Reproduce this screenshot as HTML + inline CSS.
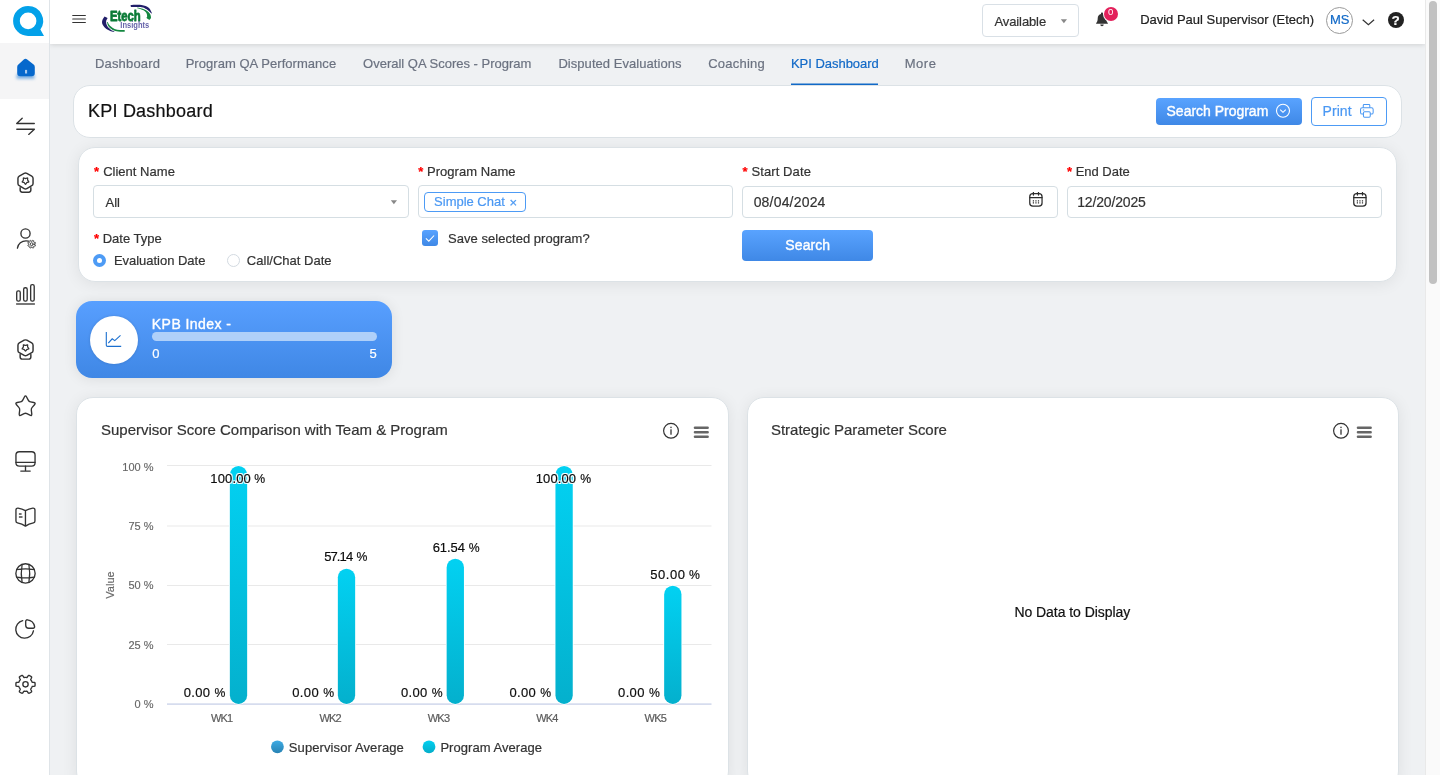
<!DOCTYPE html>
<html lang="en">
<head>
<meta charset="utf-8">
<title>KPI Dashboard</title>
<style>
*{box-sizing:border-box;margin:0;padding:0}
html,body{width:1440px;height:775px;overflow:hidden}
body{position:relative;background:#eff1f3;font-family:"Liberation Sans",Arial,Helvetica,sans-serif;color:#333;font-size:13px}
#app{position:absolute;left:0;top:0;width:1440px;height:775px;overflow:hidden;will-change:transform}
.a,.t,svg.i{position:absolute}
.t{white-space:nowrap;line-height:1;display:block}
ul{list-style:none}
a{text-decoration:none;color:inherit}
#sidebar{left:0;top:0;width:50px;height:775px;background:#fff;border-right:1px solid #dfe4e8}
#sb-active{left:0;top:43px;width:49px;height:56px;background:#f5f5f6}
#header{left:50px;top:0;width:1375px;height:44px;background:#fff;box-shadow:0 1px 5px rgba(0,0,0,.13)}
#scroll{left:1425px;top:0;width:15px;height:775px;background:#fafafa;border-left:1px solid #e9e9e9}
#thumb{left:1429px;top:1px;width:8px;height:283px;border-radius:4px;background:#c1c1c1}
.card{position:absolute;background:#fff;border-radius:18px;border:1px solid #e1e7ec}
.box{position:absolute;background:#fff;border:1px solid #d5dee3;border-radius:4px}
.btn{position:absolute;border-radius:4px;background:linear-gradient(#59a3ff,#3f88e6)}
.t{-webkit-text-stroke:.2px currentColor}
.med{-webkit-text-stroke:.38px currentColor}
</style>
</head>
<body>
<div id="app">
<header id="topbar">
<div class="a" id="header"></div>
<svg class="i" style="left:72px;top:14px" width="14" height="10" viewBox="0 0 14 10"><path d="M.7 1.500h12.700M.7 5h12.700M.7 8.500h12.700" stroke="#333" stroke-width="1.050" stroke-linecap="round" fill="none"/></svg>
<svg class="i" id="etech" style="left:100px;top:3px" width="56" height="32" viewBox="100 3 56 32">
<path d="M104.55 16.50C104.16 17.19 102.51 19.27 102.20 20.65C101.89 22.03 102.00 23.43 102.70 24.80C103.40 26.18 104.85 27.78 106.40 28.90C107.95 30.02 110.68 31.03 112.00 31.50C113.32 31.97 113.92 31.67 114.30 31.70L114.30 31.30C113.67 30.98 111.70 30.32 110.50 29.40C109.30 28.48 107.83 27.08 107.10 25.80C106.37 24.52 106.02 22.98 106.10 21.70C106.18 20.42 107.35 18.70 107.60 18.10z" fill="#211e69"/>
<path d="M107.00 22.00C107.23 22.72 107.47 24.98 108.40 26.30C109.33 27.62 110.97 29.03 112.60 29.90C114.23 30.77 116.18 31.20 118.20 31.50C120.22 31.80 123.62 31.67 124.70 31.70L124.70 29.90C123.88 29.92 121.48 30.22 119.80 30.05C118.12 29.88 116.23 29.61 114.60 28.90C112.97 28.19 111.15 26.95 110.00 25.80C108.85 24.65 108.08 22.63 107.70 22.00z" fill="#148740"/>
<path d="M130.60 4.90C132.42 4.90 138.48 4.43 141.50 4.90C144.52 5.37 146.95 6.32 148.70 7.70C150.45 9.08 151.45 12.28 152.00 13.20L151.50 13.50C150.68 12.80 148.27 10.35 146.60 9.30C144.93 8.25 144.12 7.57 141.50 7.20C138.88 6.83 132.67 7.12 130.90 7.10z" fill="#211e69"/>
<path d="M137.30 7.60C138.52 7.92 142.53 8.53 144.60 9.50C146.67 10.47 148.63 12.05 149.70 13.40C150.77 14.75 150.98 16.55 151.00 17.60C151.02 18.65 150.00 19.35 149.80 19.70L149.30 19.70C148.85 19.40 146.97 18.35 146.60 17.90C146.23 17.45 147.10 17.75 147.10 17.00C147.10 16.25 147.20 14.52 146.60 13.40C146.00 12.28 145.05 11.15 143.50 10.30C141.95 9.45 138.33 8.63 137.30 8.30z" fill="#148740"/>
<text x="109.900" y="20.600" font-family="'Liberation Sans',Arial,sans-serif" font-size="15.300" font-weight="700" fill="#0b7b37" stroke="#0b7b37" stroke-width=".8" stroke-linejoin="round" textLength="30.900" lengthAdjust="spacingAndGlyphs">Etech</text>
<text x="120.300" y="27.600" font-family="'Liberation Sans',Arial,sans-serif" font-size="8.300" font-weight="700" fill="#6663aa" textLength="28.900" lengthAdjust="spacingAndGlyphs">Insights</text>
</svg>
<div class="box" style="left:982px;top:4px;width:97px;height:33px;border-color:#d9e0e6"></div>
<span class="t" style="left:994.47px;top:14.99px;font-size:13px;color:#333;letter-spacing:-0.107px;">Available</span>
<svg class="i" style="left:1060px;top:19px" width="8" height="5" viewBox="0 0 8 5"><path d="M.8.300h6.200L3.900 4.300z" fill="#888"/></svg>
<svg class="i" style="left:1095px;top:12px" width="14" height="15" viewBox="0 0 14 15"><path d="M7 .6c.6 0 1 .4 1 1v.5c2 .5 3.300 2.200 3.300 4.300 0 2.300.6 3.600 1.500 4.500.3.300.1.900-.4.900H1.600c-.5 0-.7-.6-.4-.9.900-.9 1.500-2.200 1.500-4.500 0-2.100 1.300-3.800 3.300-4.300v-.5c0-.6.400-1 1-1zM5.300 12.600h3.400c0 .9-.8 1.700-1.700 1.700s-1.700-.8-1.700-1.700z" fill="#333"/></svg>
<div class="a" style="left:1104px;top:7px;width:14px;height:14px;border-radius:50%;background:#e3215b;box-shadow:0 0 0 1px #fff"></div>
<span class="t" style="left:1107.93px;top:7.06px;font-size:9.5px;color:#fff;-webkit-text-stroke:0;">0</span>
<span class="t" style="left:1140.13px;top:13.19px;font-size:13px;color:#222;letter-spacing:-0.006px;">David Paul Supervisor (Etech)</span>
<div class="a" style="left:1326px;top:7px;width:27px;height:27px;border-radius:50%;border:1px solid #9a9a9a;background:#fff"></div>
<span class="t" style="left:1329.93px;top:13.09px;font-size:13px;color:#1169c7;letter-spacing:-0.037px;">MS</span>
<svg class="i" style="left:1362px;top:19px" width="13" height="7" viewBox="0 0 13 7"><path d="M.7.800l5.700 5 5.700-5" stroke="#333" stroke-width="1.200" fill="none"/></svg>
<div class="a" style="left:1388px;top:12px;width:16px;height:16px;border-radius:50%;background:#222"></div>
<span class="t" style="left:1391.48px;top:13.57px;font-size:13.5px;color:#fff;font-weight:700;">?</span>
</header>
<nav id="sidenav" aria-label="Main">
<div class="a" id="sidebar"></div>
<div class="a" id="sb-active"></div>
<svg class="i" id="sbicons" style="left:0;top:0" width="49" height="775" viewBox="0 0 49 775" fill="none" stroke="#333" stroke-width="1.35" stroke-linecap="round" stroke-linejoin="round">
<defs><filter id="hs" x="-50%" y="-50%" width="200%" height="200%"><feGaussianBlur stdDeviation="1.6"/></filter></defs>
<!-- logo -->
<path d="M28.100 5.900a15 15 0 0 1 12.290 23.600L44 35.900H28.100a15 15 0 0 1 0-30zm0 6.600a8.300 8.400 0 1 0 0 16.800 8.300 8.400 0 0 0 0-16.800z" fill="#03a1e9" fill-rule="evenodd" stroke="none"/>
<!-- home -->
<path d="M19 73.500h13c1.500 0 2.500 1 2.500 2.500v2.800H16.500V76c0-1.500 1-2.500 2.500-2.500z" fill="#0668cc" opacity=".5" stroke="none" filter="url(#hs)"/>
<path d="M23.800 59.500a2.800 2.800 0 0 1 3.400 0l6.400 4.900a3.200 3.200 0 0 1 1.200 2.500v6.200a3.200 3.200 0 0 1-3.200 3.200H20.400a3.200 3.200 0 0 1-3.200-3.200v-6.200a3.200 3.200 0 0 1 1.200-2.500z" fill="#0668cc" stroke="none"/>
<rect x="25" y="69.900" width="2.100" height="3.600" fill="#a9c9ed" stroke="none"/>
<!-- swap -->
<path d="M34.300 123.500H16.700l5.500-5.200M16.800 129.200h17.600l-5.700 5.200"/>
<!-- medal 1 -->
<g><path d="M24.19 173.33Q25.50 172.60 26.81 173.33L31.74 176.07Q33.05 176.80 33.05 178.30L33.05 183.50Q33.05 185.00 31.75 185.74L26.80 188.56Q25.50 189.30 24.20 188.56L19.25 185.74Q17.95 185.00 17.95 183.50L17.95 178.30Q17.95 176.80 19.26 176.07z" stroke-width="1.45"/><path d="M25.78 184.09Q25.50 184.50 25.22 184.09L24.49 182.99Q24.21 182.58 23.73 182.44L22.46 182.08Q21.98 181.94 22.29 181.55L23.10 180.51Q23.41 180.12 23.39 179.62L23.34 178.31Q23.33 177.81 23.79 177.98L25.03 178.43Q25.50 178.60 25.97 178.43L27.21 177.98Q27.67 177.81 27.66 178.31L27.61 179.62Q27.59 180.12 27.90 180.51L28.71 181.55Q29.02 181.94 28.54 182.08L27.27 182.44Q26.79 182.58 26.51 182.99z" stroke-width="1.25"/><path d="M20.150 187.600v2.500c0 1.200.9 2.100 2.100 2.100h6.500c1.200 0 2.100-.9 2.100-2.100v-2.500" stroke-width="1.450"/></g>
<!-- user gear -->
<circle cx="25.500" cy="233.500" r="4.600"/>
<path d="M17.400 248.200c.6-4.400 4.400-7.400 8.600-7.400.9 0 1.700.1 2.400.35"/>
<path d="M34.60 244.20L34.60 244.31L34.59 244.43L34.58 244.54L34.60 244.66L35.08 244.87L35.56 245.13L35.55 245.29L35.50 245.44L35.45 245.58L35.40 245.73L35.33 245.87L35.26 246.02L35.19 246.15L35.08 246.27L34.57 246.12L34.07 245.92L33.98 246.00L33.91 246.08L33.83 246.17L33.75 246.25L33.67 246.33L33.58 246.41L33.50 246.48L33.42 246.57L33.62 247.07L33.77 247.58L33.65 247.69L33.52 247.76L33.37 247.83L33.23 247.90L33.08 247.95L32.94 248.00L32.79 248.05L32.63 248.06L32.37 247.58L32.16 247.10L32.04 247.08L31.93 247.09L31.81 247.10L31.70 247.10L31.59 247.10L31.47 247.09L31.36 247.08L31.24 247.10L31.03 247.58L30.77 248.06L30.61 248.05L30.46 248.00L30.32 247.95L30.17 247.90L30.03 247.83L29.88 247.76L29.75 247.69L29.63 247.58L29.78 247.07L29.98 246.57L29.90 246.48L29.82 246.41L29.73 246.33L29.65 246.25L29.57 246.17L29.49 246.08L29.42 246.00L29.33 245.92L28.83 246.12L28.32 246.27L28.21 246.15L28.14 246.02L28.07 245.87L28.00 245.73L27.95 245.58L27.90 245.44L27.85 245.29L27.84 245.13L28.32 244.87L28.80 244.66L28.82 244.54L28.81 244.43L28.80 244.31L28.80 244.20L28.80 244.09L28.81 243.97L28.82 243.86L28.80 243.74L28.32 243.53L27.84 243.27L27.85 243.11L27.90 242.96L27.95 242.82L28.00 242.67L28.07 242.53L28.14 242.38L28.21 242.25L28.32 242.13L28.83 242.28L29.33 242.48L29.42 242.40L29.49 242.32L29.57 242.23L29.65 242.15L29.73 242.07L29.82 241.99L29.90 241.92L29.98 241.83L29.78 241.33L29.63 240.82L29.75 240.71L29.88 240.64L30.03 240.57L30.17 240.50L30.32 240.45L30.46 240.40L30.61 240.35L30.77 240.34L31.03 240.82L31.24 241.30L31.36 241.32L31.47 241.31L31.59 241.30L31.70 241.30L31.81 241.30L31.93 241.31L32.04 241.32L32.16 241.30L32.37 240.82L32.63 240.34L32.79 240.35L32.94 240.40L33.08 240.45L33.23 240.50L33.37 240.57L33.52 240.64L33.65 240.71L33.77 240.82L33.62 241.33L33.42 241.83L33.50 241.92L33.58 241.99L33.67 242.07L33.75 242.15L33.83 242.23L33.91 242.32L33.98 242.40L34.07 242.48L34.57 242.28L35.08 242.13L35.19 242.25L35.26 242.38L35.33 242.53L35.40 242.67L35.45 242.82L35.50 242.96L35.55 243.11L35.56 243.27L35.08 243.53L34.60 243.74L34.58 243.86L34.59 243.97L34.60 244.09z" stroke-width=".95" stroke="#3a3a3a" fill="#fff"/>
<circle cx="31.700" cy="244.200" r="1.450" stroke-width=".95" stroke="#3a3a3a"/>
<!-- bars -->
<rect x="16.700" y="290.900" width="3.550" height="10.200" rx="1.550"/>
<rect x="23.650" y="287.700" width="3.550" height="13.400" rx="1.550"/>
<rect x="30.650" y="284.600" width="3.550" height="16.500" rx="1.550"/>
<path d="M16.100 304h18.800" stroke="#555" stroke-width="1.600" stroke-linecap="butt"/>
<!-- medal 2 -->
<g transform="translate(0 166.900)"><path d="M24.19 173.33Q25.50 172.60 26.81 173.33L31.74 176.07Q33.05 176.80 33.05 178.30L33.05 183.50Q33.05 185.00 31.75 185.74L26.80 188.56Q25.50 189.30 24.20 188.56L19.25 185.74Q17.95 185.00 17.95 183.50L17.95 178.30Q17.95 176.80 19.26 176.07z" stroke-width="1.45"/><path d="M25.78 184.09Q25.50 184.50 25.22 184.09L24.49 182.99Q24.21 182.58 23.73 182.44L22.46 182.08Q21.98 181.94 22.29 181.55L23.10 180.51Q23.41 180.12 23.39 179.62L23.34 178.31Q23.33 177.81 23.79 177.98L25.03 178.43Q25.50 178.60 25.97 178.43L27.21 177.98Q27.67 177.81 27.66 178.31L27.61 179.62Q27.59 180.12 27.90 180.51L28.71 181.55Q29.02 181.94 28.54 182.08L27.27 182.44Q26.79 182.58 26.51 182.99z" stroke-width="1.25"/><path d="M20.150 187.600v2.500c0 1.200.9 2.100 2.100 2.100h6.500c1.200 0 2.100-.9 2.100-2.100v-2.500" stroke-width="1.450"/></g>
<!-- star -->
<path d="M24.40 396.97Q25.50 394.83 26.60 396.97L28.24 400.17Q28.97 401.59 30.54 401.90L33.75 402.53Q36.10 403.00 34.50 404.79L32.18 407.39Q31.11 408.58 31.31 410.17L31.76 413.83Q32.05 416.21 29.91 415.13L26.93 413.62Q25.50 412.90 24.07 413.62L21.09 415.13Q18.95 416.21 19.24 413.83L19.69 410.17Q19.89 408.58 18.82 407.39L16.50 404.79Q14.90 403.00 17.25 402.53L20.46 401.90Q22.03 401.59 22.76 400.17z"/>
<!-- monitor -->
<rect x="15.950" y="451.700" width="19.100" height="14.400" rx="3.400"/>
<path d="M16 462.300h19M25.500 466.200v4.800M20.800 471.100h9.400"/>
<!-- book -->
<path d="M25.450 510.700v15.400M25.450 510.700c-2.300-1.300-5-2.100-7.400-2.500a1.800 1.800 0 0 0-2.100 1.800v11a1.900 1.900 0 0 0 1.500 1.850c2.900.6 5.600 1.600 8 3.250 2.400-1.650 5.100-2.650 8-3.250a1.900 1.900 0 0 0 1.500-1.850v-11a1.800 1.800 0 0 0-2.100-1.800c-2.400.4-5.100 1.200-7.400 2.500z"/>
<path d="M18.900 514h2.700M18.900 516.900h3.600" stroke-width="1.500" stroke-linecap="butt" stroke="#444"/>
<!-- globe -->
<circle cx="25.500" cy="573.400" r="9.650"/>
<path d="M16.800 569.700c5.800-1.100 11.600-1.100 17.400 0M16.800 577.100c5.800 1.100 11.600 1.100 17.400 0M22.100 564.500c-1.100 5.900-1.100 11.900 0 17.800M28.900 564.500c1.100 5.900 1.100 11.900 0 17.800" stroke-width="1.250"/>
<!-- pie -->
<path d="M22.700 620.600a8.900 8.900 0 1 0 10.750 10.200"/>
<path d="M25.700 621.300a1.500 1.500 0 0 1 1.700-1.500 8.300 8.300 0 0 1 7.200 6.700 1.500 1.500 0 0 1-1.500 1.700h-4.400a3 3 0 0 1-3-3z"/>
<!-- gear -->
<circle cx="25.500" cy="684.350" r="2.650"/>
<path d="M35.10 684.35L35.09 684.69L35.08 685.02L35.05 685.35L35.01 685.69L34.91 686.01L34.38 686.24L33.46 686.33L32.56 686.38L32.11 686.50L32.03 686.73L31.94 686.95L31.85 687.18L31.75 687.40L31.64 687.61L31.52 687.83L31.39 688.03L31.26 688.24L31.12 688.44L30.98 688.63L30.82 688.82L30.67 689.00L30.78 689.45L31.20 690.25L31.58 691.10L31.64 691.67L31.41 691.91L31.14 692.12L30.87 692.31L30.59 692.49L30.30 692.66L30.01 692.83L29.71 692.98L29.40 693.12L29.10 693.25L28.77 693.33L28.31 692.99L27.76 692.24L27.28 691.48L26.95 691.15L26.71 691.19L26.47 691.23L26.23 691.26L25.98 691.28L25.74 691.30L25.50 691.30L25.26 691.30L25.02 691.28L24.77 691.26L24.53 691.23L24.29 691.19L24.05 691.15L23.72 691.48L23.24 692.24L22.69 692.99L22.23 693.33L21.90 693.25L21.60 693.12L21.29 692.98L20.99 692.83L20.70 692.66L20.41 692.49L20.13 692.31L19.86 692.12L19.59 691.91L19.36 691.67L19.42 691.10L19.80 690.25L20.22 689.45L20.33 689.00L20.18 688.82L20.02 688.63L19.88 688.44L19.74 688.24L19.61 688.03L19.48 687.83L19.36 687.61L19.25 687.40L19.15 687.18L19.06 686.95L18.97 686.73L18.89 686.50L18.44 686.38L17.54 686.33L16.62 686.24L16.09 686.01L15.99 685.69L15.95 685.35L15.92 685.02L15.91 684.69L15.90 684.35L15.91 684.01L15.92 683.68L15.95 683.35L15.99 683.01L16.09 682.69L16.62 682.46L17.54 682.37L18.44 682.32L18.89 682.20L18.97 681.97L19.06 681.75L19.15 681.52L19.25 681.30L19.36 681.09L19.48 680.88L19.61 680.67L19.74 680.46L19.88 680.26L20.02 680.07L20.18 679.88L20.33 679.70L20.22 679.25L19.80 678.45L19.42 677.60L19.36 677.03L19.59 676.79L19.86 676.58L20.13 676.39L20.41 676.21L20.70 676.04L20.99 675.87L21.29 675.72L21.60 675.58L21.90 675.45L22.23 675.37L22.69 675.71L23.24 676.46L23.72 677.22L24.05 677.55L24.29 677.51L24.53 677.47L24.77 677.44L25.02 677.42L25.26 677.40L25.50 677.40L25.74 677.40L25.98 677.42L26.23 677.44L26.47 677.47L26.71 677.51L26.95 677.55L27.28 677.22L27.76 676.46L28.31 675.71L28.77 675.37L29.10 675.45L29.40 675.58L29.71 675.72L30.01 675.87L30.30 676.04L30.59 676.21L30.87 676.39L31.14 676.58L31.41 676.79L31.64 677.03L31.58 677.60L31.20 678.45L30.78 679.25L30.67 679.70L30.82 679.88L30.98 680.07L31.12 680.26L31.26 680.46L31.39 680.67L31.52 680.88L31.64 681.09L31.75 681.30L31.85 681.52L31.94 681.75L32.03 681.97L32.11 682.20L32.56 682.32L33.46 682.37L34.38 682.46L34.91 682.69L35.01 683.01L35.05 683.35L35.08 683.68L35.09 684.01z"/>
</svg>

</nav>
<div class="a" id="scroll"></div><div class="a" id="thumb"></div>
<main>
<nav id="tabs">
<a class="t" style="left:94.93px;top:56.99px;font-size:13px;color:#6b7280;letter-spacing:0.188px;">Dashboard</a>
<a class="t" style="left:185.63px;top:56.99px;font-size:13px;color:#6b7280;letter-spacing:0.046px;">Program QA Performance</a>
<a class="t" style="left:363.08px;top:56.99px;font-size:13px;color:#6b7280;">Overall QA Scores - Program</a>
<a class="t" style="left:558.43px;top:56.99px;font-size:13px;color:#6b7280;letter-spacing:0.048px;">Disputed Evaluations</a>
<a class="t" style="left:708.14px;top:56.99px;font-size:13px;color:#6b7280;letter-spacing:0.253px;">Coaching</a>
<a class="t" style="left:790.93px;top:56.99px;font-size:13px;color:#1169c7;letter-spacing:-0.022px;">KPI Dashboard</a>
<a class="t" style="left:904.73px;top:56.99px;font-size:13px;color:#6b7280;letter-spacing:0.509px;">More</a>
<div class="a" style="left:791px;top:83px;width:87px;height:2px;background:linear-gradient(to bottom,rgba(17,105,199,.5) 0,rgba(17,105,199,.5) 1px,#1169c7 1px)"></div>
</nav>
<section id="page-title">
<div class="card" style="left:73px;top:85px;width:1329px;height:53px;border-radius:17px;border-color:#dce2e6"></div>
<h1 class="t" style="left:88.02px;top:101.76px;font-size:18px;color:#111;letter-spacing:0.214px;font-weight:400;">KPI Dashboard</h1>
<div class="btn" style="left:1156px;top:98px;width:146px;height:27px"></div>
<span class="t med" style="left:1166.56px;top:104.15px;font-size:14px;color:#fff;letter-spacing:-0.013px;">Search Program</span>
<svg class="i" style="left:1275px;top:102.900px" width="16" height="16" viewBox="0 0 16 16"><circle cx="8" cy="7.800" r="6.500" stroke="#fff" stroke-width="1.100" fill="none"/><path d="M5.200 6.600l2.800 2.700 2.800-2.700" stroke="#fff" stroke-width="1.100" fill="none"/></svg>
<div class="a" style="left:1311px;top:97px;width:76px;height:29px;border:1px solid #4d9bf5;border-radius:4px;background:#fff"></div>
<span class="t" style="left:1322.55px;top:104.15px;font-size:14px;color:#4a98f3;letter-spacing:0.066px;">Print</span>
<svg class="i" style="left:1360.100px;top:103.500px" width="14" height="14.500" viewBox="0 0 15 15.500" fill="none" stroke="#4a98f3" stroke-width="1.100"><path d="M3.500 4V1.500c0-.5.400-.9.900-.9h5.200c.5 0 .9.400.9.900V4"/><rect x=".6" y="4" width="13.500" height="6.800" rx="1.800"/><rect x="3.700" y="8.300" width="7.300" height="5.800" rx="1.200" fill="#fff"/><path d="M3 6.400h1.500"/></svg>
</section>
<form id="filters">
<div class="card" style="left:78px;top:147px;width:1319px;height:135px;border-radius:17px;border-color:#dce2e6;box-shadow:0 2px 16px rgba(0,0,0,.075)"></div>
<span class="t" style="left:93.96px;top:164.89px;font-size:13px;color:#f00;font-weight:700;">*</span>
<label class="t" style="left:103.14px;top:164.99px;font-size:13px;color:#333;letter-spacing:0.021px;">Client Name</label>
<span class="t" style="left:418.36px;top:164.89px;font-size:13px;color:#f00;font-weight:700;">*</span>
<label class="t" style="left:426.93px;top:164.99px;font-size:13px;color:#333;letter-spacing:0.046px;">Program Name</label>
<span class="t" style="left:742.56px;top:164.89px;font-size:13px;color:#f00;font-weight:700;">*</span>
<label class="t" style="left:751.41px;top:164.99px;font-size:13px;color:#333;letter-spacing:0.105px;">Start Date</label>
<span class="t" style="left:1067.06px;top:164.89px;font-size:13px;color:#f00;font-weight:700;">*</span>
<label class="t" style="left:1075.63px;top:164.99px;font-size:13px;color:#333;letter-spacing:-0.008px;">End Date</label>
<span class="t" style="left:93.96px;top:232.09px;font-size:13px;color:#f00;font-weight:700;">*</span>
<label class="t" style="left:102.73px;top:232.19px;font-size:13px;color:#333;letter-spacing:0.009px;">Date Type</label>
<div class="box" style="left:93px;top:185px;width:316px;height:33px"></div>
<span class="t" style="left:105.47px;top:195.79px;font-size:13px;color:#333;">All</span>
<svg class="i" style="left:390px;top:200px" width="8" height="5" viewBox="0 0 8 5"><path d="M.8.200h6.200L3.900 4.300z" fill="#888"/></svg>
<div class="box" style="left:418px;top:185px;width:315px;height:33px"></div>
<div class="a" style="left:424px;top:192px;width:102px;height:20px;border:1px solid #4d9bf5;border-radius:4px"></div>
<span class="t" style="left:434.11px;top:194.79px;font-size:13px;color:#4a98f3;letter-spacing:-0.012px;">Simple Chat</span>
<span class="t" style="left:509.60px;top:195.59px;font-size:13px;color:#4a98f3;">×</span>
<div class="box" style="left:742px;top:186px;width:316px;height:32px"></div>
<span class="t" style="left:753.65px;top:195.15px;font-size:14px;color:#333;letter-spacing:0.188px;">08/04/2024</span>
<div class="box" style="left:1067px;top:186px;width:315px;height:32px"></div>
<span class="t" style="left:1077.23px;top:195.15px;font-size:14px;color:#333;letter-spacing:-0.157px;">12/20/2025</span>
<svg class="i" style="left:1029.200px;top:191.500px" width="14" height="15" viewBox="0 0 14 15" fill="none" stroke="#2e2e2e" stroke-width="1.250"><rect x=".75" y="1.700" width="12.300" height="12.400" rx="3.100"/><path d="M.8 5.500h12.200M4.400.4v2.700M9.500.4v2.700" stroke-linecap="round"/><path d="M3.800 8.850h1.200M6.350 8.850h1.200M8.900 8.850h1.200M3.800 10.900h1.200M6.350 10.900h1.200M8.900 10.900h1.200" stroke-width="1.200"/></svg>
<svg class="i" style="left:1353.300px;top:191.500px" width="14" height="15" viewBox="0 0 14 15" fill="none" stroke="#2e2e2e" stroke-width="1.250"><rect x=".75" y="1.700" width="12.300" height="12.400" rx="3.100"/><path d="M.8 5.500h12.200M4.400.4v2.700M9.500.4v2.700" stroke-linecap="round"/><path d="M3.800 8.850h1.200M6.350 8.850h1.200M8.900 8.850h1.200M3.800 10.900h1.200M6.350 10.900h1.200M8.900 10.900h1.200" stroke-width="1.200"/></svg>
<div class="a" style="left:93px;top:254px;width:13.200px;height:13.200px;border-radius:50%;background:#4d9bf5"></div><div class="a" style="left:96.700px;top:257.700px;width:5.800px;height:5.800px;border-radius:50%;background:#fff"></div>
<span class="t" style="left:113.93px;top:253.79px;font-size:13px;color:#333;letter-spacing:-0.024px;">Evaluation Date</span>
<div class="a" style="left:227px;top:254px;width:13px;height:13px;border-radius:50%;border:1px solid #d3dae1;background:#fff"></div>
<span class="t" style="left:246.84px;top:253.79px;font-size:13px;color:#333;letter-spacing:0.015px;">Call/Chat Date</span>
<div class="btn" style="left:422px;top:230px;width:16px;height:16px;border-radius:3px"></div>
<svg class="i" style="left:422px;top:230px" width="16" height="16" viewBox="0 0 16 16"><path d="M3.900 8.400l2.900 2.800 5.300-5.700" stroke="#fff" stroke-width="1.100" fill="none"/></svg>
<span class="t" style="left:448.11px;top:231.79px;font-size:13px;color:#333;letter-spacing:0.031px;">Save selected program?</span>
<div class="btn" style="left:742px;top:230px;width:131px;height:31px"></div>
<span class="t med" style="left:785.36px;top:238.15px;font-size:14px;color:#fff;letter-spacing:0.077px;">Search</span>
</form>
<section id="kpb">
<div class="a" style="left:76px;top:301px;width:316px;height:77px;border-radius:16px;background:linear-gradient(#589fff,#3f87e5);box-shadow:0 1px 14px rgba(0,0,0,.09)"></div>
<div class="a" style="left:90px;top:316px;width:48px;height:48px;border-radius:50%;background:#fff;box-shadow:0 0 3px rgba(0,0,0,.15)"></div>
<svg class="i" style="left:105px;top:331px" width="17" height="17" viewBox="0 0 17 17" fill="none" stroke="#1b6fcf" stroke-width="1.100"><path d="M1.300 1v13.200c0 .7.500 1.200 1.200 1.200h13.700"/><path d="M3.300 12.200l3.900-4.400 2.600 1.800 5.700-5.200"/></svg>
<span class="t med" style="left:151.85px;top:316.85px;font-size:14px;color:#fff;letter-spacing:0.437px;">KPB Index -</span>
<div class="a" style="left:152px;top:332px;width:225px;height:9px;border-radius:4.500px;background:#afd0f9"></div>
<span class="t" style="left:152.19px;top:346.79px;font-size:13px;color:#fff;">0</span>
<span class="t" style="left:369.48px;top:346.79px;font-size:13px;color:#fff;">5</span>
</section>
<section id="chart-supervisor">
<div class="card" style="left:76px;top:397px;width:653px;height:391px;border-radius:17px;border-color:#dce2e6;box-shadow:0 2px 16px rgba(0,0,0,.075)"></div>
<h2 class="t" style="left:101.02px;top:422.30px;font-size:15px;color:#333;letter-spacing:-0.014px;font-weight:400;">Supervisor Score Comparison with Team &amp; Program</h2>
<svg class="i" style="left:662px;top:422px" width="18" height="18" viewBox="0 0 18 18"><circle cx="9" cy="8.800" r="7.400" stroke="#333" stroke-width="1.200" fill="none"/><rect x="8.350" y="4.700" width="1.300" height="1.400" fill="#333"/><rect x="8.350" y="7.300" width="1.300" height="5.400" fill="#333"/></svg>
<svg class="i" style="left:693.3px;top:425px" width="17" height="14" viewBox="0 0 17 14"><path d="M2 2.700h12.600M2 7.200h12.600M2 11.700h12.600" stroke="#666" stroke-width="2.600" stroke-linecap="round" fill="none"/></svg>
<svg class="i" id="chart" style="left:77px;top:450px" width="650" height="325" viewBox="77 450 650 325" font-family="'Liberation Sans',Arial,sans-serif">
<defs><linearGradient id="g1" x1="0" y1="0" x2="0" y2="1"><stop offset="0" stop-color="#02d1f2"/><stop offset="1" stop-color="#04b0cd"/></linearGradient><linearGradient id="g2" x1="0" y1="0" x2="0" y2="1"><stop offset="0" stop-color="#3eabe4"/><stop offset="1" stop-color="#2883b4"/></linearGradient><filter id="halo" x="-10%" y="-40%" width="120%" height="180%" color-interpolation-filters="sRGB"><feMorphology in="SourceAlpha" operator="dilate" radius=".9" result="d"/><feGaussianBlur in="d" stdDeviation=".3" result="b"/><feFlood flood-color="#fff"/><feComposite in2="b" operator="in" result="h"/><feMerge><feMergeNode in="h"/><feMergeNode in="SourceGraphic"/></feMerge></filter><linearGradient id="g3" x1="0" y1="0" x2="0" y2="1"><stop offset="0" stop-color="#02d0f1"/><stop offset="1" stop-color="#05adc9"/></linearGradient></defs>
<path d="M167 465.5H711.500" stroke="#e9e9e9" stroke-width="1"/>
<path d="M167 526.0H711.500" stroke="#e9e9e9" stroke-width="1"/>
<path d="M167 585.5H711.500" stroke="#e9e9e9" stroke-width="1"/>
<path d="M167 644.5H711.500" stroke="#e9e9e9" stroke-width="1"/>
<path d="M167 704.200H711.500" stroke="#d6dcee" stroke-width="1.700"/>
<text x="153.5" y="471" font-size="11" fill="#666" stroke="#666" stroke-width="0.15" text-anchor="end">100 %</text>
<text x="153.5" y="530" font-size="11" fill="#666" stroke="#666" stroke-width="0.15" text-anchor="end">75 %</text>
<text x="153.5" y="589" font-size="11" fill="#666" stroke="#666" stroke-width="0.15" text-anchor="end">50 %</text>
<text x="153.5" y="648.6" font-size="11" fill="#666" stroke="#666" stroke-width="0.15" text-anchor="end">25 %</text>
<text x="153.5" y="708" font-size="11" fill="#666" stroke="#666" stroke-width="0.15" text-anchor="end">0 %</text>
<text transform="translate(113.500 585) rotate(-90)" text-anchor="middle" font-size="11" fill="#666" stroke="#666" stroke-width=".15">Value</text>
<rect x="229.85" y="466" width="17.300" height="237.9" rx="8.650" fill="url(#g1)" stroke="#fff" stroke-width="1.600" paint-order="stroke"/>
<rect x="337.85" y="568.7" width="17.300" height="135.2" rx="8.650" fill="url(#g1)" stroke="#fff" stroke-width="1.600" paint-order="stroke"/>
<rect x="446.65" y="558.8" width="17.300" height="145.1" rx="8.650" fill="url(#g1)" stroke="#fff" stroke-width="1.600" paint-order="stroke"/>
<rect x="555.45" y="466" width="17.300" height="237.9" rx="8.650" fill="url(#g1)" stroke="#fff" stroke-width="1.600" paint-order="stroke"/>
<rect x="664.15" y="585.8" width="17.300" height="118.1" rx="8.650" fill="url(#g1)" stroke="#fff" stroke-width="1.600" paint-order="stroke"/>
<text y="482.9" font-size="13" fill="#0c0c0c" stroke="#0c0c0c" stroke-width=".18" filter="url(#halo)"><tspan x="210.31" textLength="40.50">100.00</tspan> <tspan x="254.24" textLength="10.87" lengthAdjust="spacingAndGlyphs">%</tspan></text>
<text y="561" font-size="13" fill="#0c0c0c" stroke="#0c0c0c" stroke-width=".18" filter="url(#halo)"><tspan x="324.18" textLength="29.00">57.14</tspan> <tspan x="356.54" textLength="10.87" lengthAdjust="spacingAndGlyphs">%</tspan></text>
<text y="552" font-size="13" fill="#0c0c0c" stroke="#0c0c0c" stroke-width=".18" filter="url(#halo)"><tspan x="432.64" textLength="32.24">61.54</tspan> <tspan x="468.74" textLength="10.87" lengthAdjust="spacingAndGlyphs">%</tspan></text>
<text y="482.9" font-size="13" fill="#0c0c0c" stroke="#0c0c0c" stroke-width=".18" filter="url(#halo)"><tspan x="535.71" textLength="40.30">100.00</tspan> <tspan x="580.34" textLength="10.87" lengthAdjust="spacingAndGlyphs">%</tspan></text>
<text y="579.2" font-size="13" fill="#0c0c0c" stroke="#0c0c0c" stroke-width=".18" filter="url(#halo)"><tspan x="650.28" textLength="34.73">50.00</tspan> <tspan x="689.04" textLength="10.87" lengthAdjust="spacingAndGlyphs">%</tspan></text>
<text y="696.7" font-size="13" fill="#0c0c0c" stroke="#0c0c0c" stroke-width=".18" filter="url(#halo)"><tspan x="183.69" textLength="26.32">0.00</tspan> <tspan x="214.54" textLength="10.87" lengthAdjust="spacingAndGlyphs">%</tspan></text>
<text y="696.7" font-size="13" fill="#0c0c0c" stroke="#0c0c0c" stroke-width=".18" filter="url(#halo)"><tspan x="292.29" textLength="26.32">0.00</tspan> <tspan x="323.14" textLength="10.87" lengthAdjust="spacingAndGlyphs">%</tspan></text>
<text y="696.7" font-size="13" fill="#0c0c0c" stroke="#0c0c0c" stroke-width=".18" filter="url(#halo)"><tspan x="400.89" textLength="26.32">0.00</tspan> <tspan x="431.74" textLength="10.87" lengthAdjust="spacingAndGlyphs">%</tspan></text>
<text y="696.7" font-size="13" fill="#0c0c0c" stroke="#0c0c0c" stroke-width=".18" filter="url(#halo)"><tspan x="509.49" textLength="26.32">0.00</tspan> <tspan x="540.34" textLength="10.87" lengthAdjust="spacingAndGlyphs">%</tspan></text>
<text y="696.7" font-size="13" fill="#0c0c0c" stroke="#0c0c0c" stroke-width=".18" filter="url(#halo)"><tspan x="618.09" textLength="26.32">0.00</tspan> <tspan x="648.94" textLength="10.87" lengthAdjust="spacingAndGlyphs">%</tspan></text>
<text x="222.1" y="722.2" font-size="11" fill="#5c5c5c" stroke="#5c5c5c" stroke-width="0.2" text-anchor="middle" textLength="22.2">WK1</text>
<text x="330.5" y="722.2" font-size="11" fill="#5c5c5c" stroke="#5c5c5c" stroke-width="0.2" text-anchor="middle" textLength="22.2">WK2</text>
<text x="438.9" y="722.2" font-size="11" fill="#5c5c5c" stroke="#5c5c5c" stroke-width="0.2" text-anchor="middle" textLength="22.2">WK3</text>
<text x="547.3" y="722.2" font-size="11" fill="#5c5c5c" stroke="#5c5c5c" stroke-width="0.2" text-anchor="middle" textLength="22.2">WK4</text>
<text x="655.7" y="722.2" font-size="11" fill="#5c5c5c" stroke="#5c5c5c" stroke-width="0.2" text-anchor="middle" textLength="22.2">WK5</text>
<circle cx="277.400" cy="746.800" r="6.400" fill="url(#g2)"/>
<text x="288.8" y="752" font-size="13" fill="#333" stroke="#333" stroke-width="0.2" textLength="115.0">Supervisor Average</text>
<circle cx="429" cy="746.800" r="6.400" fill="url(#g3)"/>
<text x="440.4" y="752" font-size="13" fill="#333" stroke="#333" stroke-width="0.2" textLength="101.5">Program Average</text>
</svg>
</section>
<section id="chart-strategic">
<div class="card" style="left:747px;top:397px;width:652px;height:391px;border-radius:17px;border-color:#dce2e6;box-shadow:0 2px 16px rgba(0,0,0,.075)"></div>
<h2 class="t" style="left:771.02px;top:422.30px;font-size:15px;color:#333;letter-spacing:-0.033px;font-weight:400;">Strategic Parameter Score</h2>
<svg class="i" style="left:1332px;top:422px" width="18" height="18" viewBox="0 0 18 18"><circle cx="9" cy="8.800" r="7.400" stroke="#333" stroke-width="1.200" fill="none"/><rect x="8.350" y="4.700" width="1.300" height="1.400" fill="#333"/><rect x="8.350" y="7.300" width="1.300" height="5.400" fill="#333"/></svg>
<svg class="i" style="left:1356.2px;top:425px" width="17" height="14" viewBox="0 0 17 14"><path d="M2 2.700h12.600M2 7.200h12.600M2 11.700h12.600" stroke="#666" stroke-width="2.600" stroke-linecap="round" fill="none"/></svg>
<p class="t" style="left:1014.45px;top:605.05px;font-size:14px;color:#111;letter-spacing:-0.055px;">No Data to Display</p>
</section>
</main>
</div>
</body>
</html>
